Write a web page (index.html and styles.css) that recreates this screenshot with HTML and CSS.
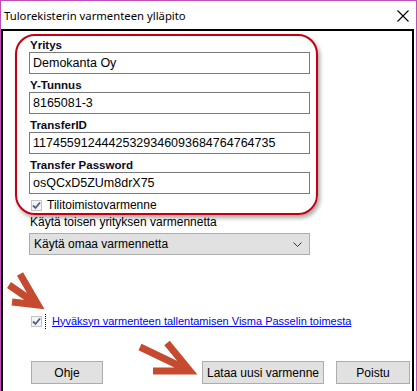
FILE: index.html
```html
<!DOCTYPE html>
<html lang="fi">
<head>
    <meta charset="UTF-8">
    <meta name="viewport" content="width=device-width, initial-scale=1.0">
    <title>Tulorekisterin varmenteen ylläpito</title>
    <link rel="stylesheet" href="styles.css">
</head>
<body>
    <div class="window">
        <div class="titlebar">
            <span class="title">Tulorekisterin varmenteen ylläpito</span>
            <svg class="close" width="12" height="12" viewBox="0 0 12 12">
                <path d="M0.5 0.5 L11.5 11.5 M11.5 0.5 L0.5 11.5" stroke="#000" stroke-width="1.1" fill="none"/>
            </svg>
        </div>

        <div class="client">
            <div class="highlight">
                <label class="field-label">Yritys</label>
                <div class="textbox">Demokanta Oy</div>

                <label class="field-label">Y-Tunnus</label>
                <div class="textbox">8165081-3</div>

                <label class="field-label">TransferID</label>
                <div class="textbox">11745591244425329346093684764764735</div>

                <label class="field-label">Transfer Password</label>
                <div class="textbox">osQCxD5ZUm8drX75</div>

                <div class="check-row">
                    <span class="checkbox">
                        <svg width="9" height="9" viewBox="0 0 9 9"><path d="M1 4.5 L3.5 7 L8 1.5" stroke="#4d5d8c" stroke-width="1.8" fill="none"/></svg>
                    </span>
                    <span class="check-text">Tilitoimistovarmenne</span>
                </div>
            </div>

            <div class="plain-label">Käytä toisen yrityksen varmennetta</div>
            <div class="select">
                <span>Käytä omaa varmennetta</span>
                <svg width="9" height="5" viewBox="0 0 9 5"><path d="M0.5 0.5 L4.5 4.5 L8.5 0.5" stroke="#333" stroke-width="1" fill="none"/></svg>
            </div>

            <div class="accept-row">
                <span class="checkbox">
                    <svg width="9" height="9" viewBox="0 0 9 9"><path d="M1 4.5 L3.5 7 L8 1.5" stroke="#4d5d8c" stroke-width="1.8" fill="none"/></svg>
                </span>
                <a class="accept-link" href="#">Hyväksyn varmenteen tallentamisen Visma Passelin toimesta</a>
            </div>

            <div class="buttons">
                <button class="btn btn-help">Ohje</button>
                <button class="btn btn-load">Lataa uusi varmenne</button>
                <button class="btn btn-quit">Poistu</button>
            </div>
        </div>

        <!-- annotation arrows drawn over the dialog -->
        <svg class="arrows" width="417" height="391" viewBox="0 0 417 391">
            <g stroke="#c64a30" stroke-width="7" fill="none" stroke-linecap="butt" stroke-linejoin="miter">
                <path d="M9 285 L38 305 M20 274 L38 305 L12 302"/>
                <path d="M140 347 L190 371 M167 343 L190 371 L153 371"/>
            </g>
        </svg>
    </div>
</body>
</html>
```

FILE: styles.css
```css
body {
    margin: 0;
    padding: 0;
    width: 417px;
    height: 391px;
    overflow: hidden;
    background: #fff;
    font-family: 'Liberation Sans', Arial, sans-serif;
    font-size: 12px;
    color: #000;
}

.window {
    position: relative;
    height: 391px;
    box-sizing: border-box;
    border: 1px solid #c14dbb;
    border-bottom: none;
    background: #fff;
}

.titlebar {
    height: 28px;
    display: flex;
    align-items: center;
    justify-content: space-between;
    padding: 0 7px 0 3px;
}

.title {
    font-family: 'Noto Sans', sans-serif;
    font-size: 11.3px;
    color: #000;
}

.close {
    margin-top: 1px;
}

.client {
    height: 362px;
    margin-right: 2px;
    border: 2px solid #000;
    border-bottom: none;
    background: #fff;
}

.highlight {
    margin: 3px 0 0 12px;
    width: 303px;
    box-sizing: border-box;
    border: 2px solid #c40010;
    border-radius: 20px;
    padding: 2px 6px 1px 12px;
    box-shadow: 2px 3px 4px rgba(0, 0, 0, 0.35);
}

.field-label {
    display: block;
    font-weight: bold;
    font-size: 11.5px;
    line-height: 14px;
    margin-left: 1px;
    color: #0a0a1e;
}

.textbox {
    height: 22px;
    box-sizing: border-box;
    border: 1px solid #7a7a7a;
    padding: 0 3px;
    margin-bottom: 4px;
    font-size: 12.5px;
    line-height: 20px;
    color: #000;
}

.check-row {
    display: flex;
    align-items: center;
    height: 14px;
    margin-top: 3px;
    margin-left: 2px;
}

.checkbox {
    width: 11px;
    height: 11px;
    box-sizing: border-box;
    border: 1px solid #c4c4c4;
    background: #f4f4f4;
    display: flex;
    align-items: center;
    justify-content: center;
}

.check-text {
    margin-left: 5px;
    line-height: 14px;
}

.plain-label {
    margin: 0 0 0 27px;
    line-height: 14px;
}

.select {
    margin: 4px 0 0 26px;
    width: 281px;
    height: 22px;
    box-sizing: border-box;
    border: 1px solid #adadad;
    background: #e1e1e1;
    display: flex;
    align-items: center;
    justify-content: space-between;
    padding: 0 7px 0 4px;
}

.accept-row {
    display: flex;
    align-items: center;
    margin: 59px 0 0 28px;
    height: 14px;
}

.accept-link {
    margin-left: 3px;
    padding: 1px 0 1px 6px;
    border-left: 1px dotted #000;
    font-size: 11px;
    line-height: 13px;
    color: #0000ff;
    text-decoration: underline;
}

.buttons {
    display: flex;
    margin-top: 33px;
    padding: 0 2px 0 28px;
}

.btn {
    height: 23px;
    box-sizing: border-box;
    border: 1px solid #adadad;
    background: #e1e1e1;
    font-family: 'Liberation Sans', Arial, sans-serif;
    font-size: 12px;
    color: #000;
    padding: 0;
}

.btn-help {
    width: 72px;
}

.btn-load {
    width: 122px;
    margin-left: auto;
}

.btn-quit {
    width: 74px;
    margin-left: 12px;
}

.arrows {
    position: absolute;
    top: -1px;
    left: -1px;
    pointer-events: none;
}
```
